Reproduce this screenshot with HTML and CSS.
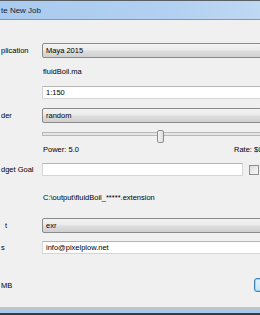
FILE: index.html
```html
<!DOCTYPE html>
<html>
<head>
<meta charset="utf-8">
<link rel="stylesheet" href="styles.css">
</head>
<body>
<div class="window">
  <div class="titlebar"><span class="title">te New Job</span></div>
  <div class="content">
    <div class="row r1"><span class="label">plication</span><div class="combo wide">Maya 2015</div></div>
    <div class="row r2"><span class="label"></span><span class="text">fluidBoil.ma</span></div>
    <div class="row r3"><span class="label"></span><div class="field wide">1:150</div></div>
    <div class="row r4"><span class="label">der</span><div class="combo wide">random</div></div>
    <div class="row r5"><span class="label"></span><div class="slider"><div class="groove"></div><div class="handle"></div></div></div>
    <div class="row r6"><span class="label"></span><span class="power">Power: 5.0</span><span class="text">Rate: $0</span></div>
    <div class="row r7"><span class="label">dget Goal</span><div class="field budget"></div><div class="check"></div></div>
    <div class="row r8"><span class="label"></span><span class="text">C:\output\fluidBoil_*****.extension</span></div>
    <div class="row r9"><span class="label lt">t</span><div class="combo wide">exr</div></div>
    <div class="row r10"><span class="label ls">s</span><div class="field wide">info@pixelplow.net</div></div>
    <div class="row r11"><span class="label">MB</span><div class="btn"></div></div>
  </div>
  <div class="frame-bottom"></div>
</div>
</body>
</html>
```
FILE: styles.css
```css
html, body {
  margin: 0;
  padding: 0;
}
body {
  width: 260px;
  height: 315px;
  overflow: hidden;
  background: #f0f0f0;
  font-family: "Liberation Sans", Arial, sans-serif;
  font-size: 7.5px;
  color: #000;
}
.window {
  width: 300px;
  display: flex;
  flex-direction: column;
}
.titlebar {
  height: 18px;
  border-top: 1px solid #5a5f66;
  border-bottom: 1px solid #8795a6;
  background: linear-gradient(to right, #a9cbef 0%, #b3d1f1 60%, #c5dcf4 100%);
  display: flex;
  align-items: center;
}
.title {
  font-size: 8px;
  color: #10223a;
  padding-left: 1px;
}
.content {
  padding-top: 22px;
  display: flex;
  flex-direction: column;
}
.row {
  display: flex;
  align-items: center;
}
.label {
  width: 42px;
  flex: none;
  padding-left: 1px;
  box-sizing: border-box;
}
.label.lt { padding-left: 5px; }
.label.ls { padding-left: 1px; }
.r1 { height: 16px; }
.r2 { height: 26px; }
.r3 { height: 16px; }
.r4 { height: 30px; }
.r5 { height: 14px; }
.r6 { height: 10px; }
.r7 { height: 31px; }
.r8 { height: 24px; }
.r9 { height: 32px; }
.r10 { height: 13px; }
.r11 { height: 53px; }
.text { padding-left: 1px; }
.combo {
  height: 15px;
  box-sizing: border-box;
  border: 1px solid #8a8a8a;
  border-radius: 2px;
  background: linear-gradient(#f3f3f3 0%, #ebebeb 45%, #dddddd 55%, #d0d0d0 100%);
  padding-left: 3px;
  display: flex;
  align-items: center;
}
.wide { width: 250px; }
.field {
  height: 13px;
  box-sizing: border-box;
  background: #fff;
  border: 1px solid #d5d5d5;
  border-top-color: #b5b5b5;
  padding-left: 3px;
  display: flex;
  align-items: center;
}
.budget { width: 201px; }
.check {
  width: 10px;
  height: 10px;
  box-sizing: border-box;
  margin-left: 6px;
  border: 1px solid #8e8f8f;
  background: linear-gradient(135deg, #dcdcdc, #f8f8f8);
}
.slider {
  position: relative;
  width: 250px;
  height: 14px;
}
.groove {
  position: absolute;
  left: 0;
  right: 0;
  top: 2px;
  height: 4px;
  box-sizing: border-box;
  border: 1px solid #b8b8b8;
  background: #e6e6e6;
}
.handle {
  position: absolute;
  left: 115px;
  top: 0;
  width: 7px;
  height: 13px;
  box-sizing: border-box;
  border: 1px solid #8c8c8c;
  border-radius: 2px;
  background: linear-gradient(to right, #f4f4f4, #dedede);
}
.power { width: 191px; flex: none; padding-left: 1px; box-sizing: border-box; }
.r11 { align-items: flex-start; padding-top: 24px; box-sizing: border-box; }
.r11 .label { margin-top: 3px; }
.btn {
  margin-left: 212px;
  width: 40px;
  height: 14px;
  box-sizing: border-box;
  border: 1px solid #3c7fb1;
  border-radius: 3px;
  background: linear-gradient(#e5f4fc, #c4e5f6);
  box-shadow: inset 0 0 0 1px #9dd5f3;
}
.frame-bottom {
  height: 8px;
  box-sizing: border-box;
  border-top: 3px solid #c4c4c4;
  border-bottom: 2px solid #3a3a3a;
  background: #a9c9ec;
}
```
